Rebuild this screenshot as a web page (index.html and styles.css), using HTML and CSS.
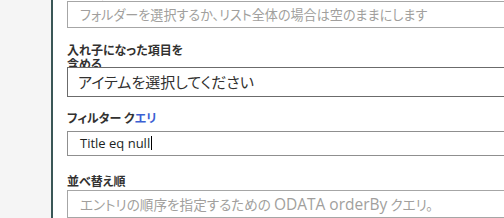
FILE: index.html
```html
<!DOCTYPE html>
<html lang="ja">
<head>
<meta charset="utf-8">
<link rel="stylesheet" href="styles.css">
</head>
<body>
<div class="page">
  <div class="side"></div>
  <div class="main">
    <div class="label label-top">フォルダー</div>
    <div class="box box-1"><span class="ph ph-1">フォルダーを選択するか、リスト全体の場合は空のままにします</span></div>

    <div class="label label-2">入れ子になった項目を含める</div>
    <div class="box box-2"><span class="val-lg">アイテムを選択してください</span></div>

    <div class="label label-3">フィルター ク<span class="spell">エリ</span></div>
    <div class="box box-3"><span class="val">Title eq null</span><span class="caret"></span></div>

    <div class="label label-4">並べ替え順</div>
    <div class="box box-4"><span class="ph">エントリの順序を指定するための <span class="lat">ODATA orderBy</span> クエリ。</span></div>
  </div>
</div>
</body>
</html>
```

FILE: styles.css
```css
html, body {
  margin: 0;
  padding: 0;
  background: #ffffff;
}

body {
  font-family: "Noto Sans CJK JP", "Noto Sans", sans-serif;
  font-feature-settings: "palt";
  color: #323130;
}

.page {
  display: flex;
  width: 504px;
  height: 218px;
  overflow: hidden;
}

.side {
  width: 51px;
  flex: none;
  background: #f5f5f5;
  border-right: 2px solid #3a5757;
}

.main {
  flex: 1;
  min-width: 0;
  padding-left: 14px;
  display: flex;
  flex-direction: column;
  overflow: hidden;
}

.label {
  font-size: 12px;
  font-weight: 600;
  line-height: 14px;
  max-width: 128px;
  color: #323130;
}

.label-top {
  margin-top: -13px;
  height: 14px;
}

.label-2 {
  margin-top: 15px;
}

.label-3 {
  margin-top: 14px;
}

.label-4 {
  margin-top: 18px;
}

.spell {
  color: #3b5fd3;
}

.box {
  position: relative;
  z-index: 1;
  box-sizing: border-box;
  width: calc(100% + 10px);
  background: #ffffff;
  border: 1px solid #a6a6a6;
  display: flex;
  align-items: center;
  padding-left: 12px;
  white-space: nowrap;
}

.box-1 {
  height: 29px;
}

.box-2 {
  margin-top: -4px;
  height: 32px;
  border-color: #6b6b6b;
  padding-left: 10px;
}

.box-3 {
  margin-top: 6px;
  height: 27px;
  border-color: #8f8f8f;
}

.box-4 {
  margin-top: 2px;
  height: 30px;
}

.ph {
  font-family: "Noto Sans CJK JP", sans-serif;
  font-size: 13.6px;
  color: #a19f9d;
}

.ph-1 {
  font-size: 13.1px;
}

.lat {
  font-family: "Open Sans", "Noto Sans", sans-serif;
  font-size: 15.5px;
}

.val-lg {
  font-size: 15px;
  color: #323130;
}

.val {
  font-family: "Open Sans", "Noto Sans", sans-serif;
  font-size: 13px;
  color: #201f1e;
}

.caret {
  display: inline-block;
  width: 1px;
  height: 14px;
  margin-left: 1px;
  background: #000000;
}
```
